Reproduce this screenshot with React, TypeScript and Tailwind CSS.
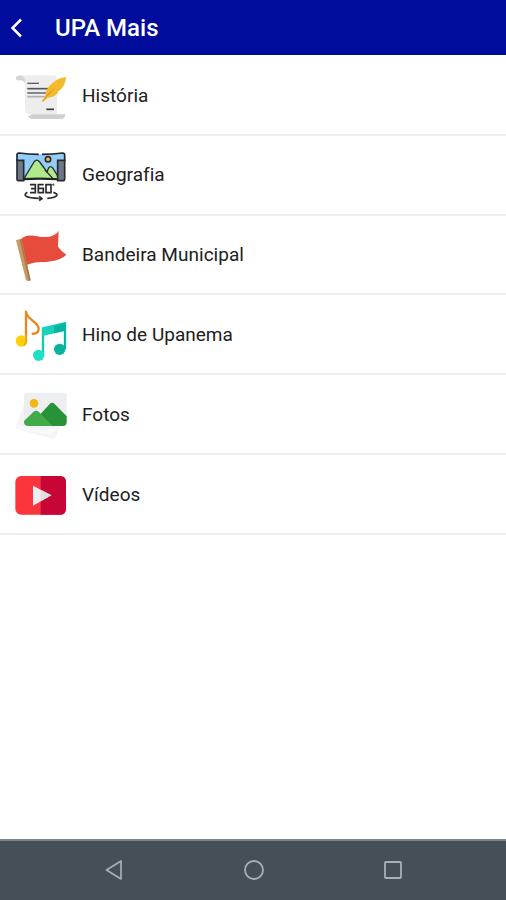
import type { ReactNode } from 'react';

const ScrollIcon = () => (
    <svg viewBox="21 15 156 156" className="size-[52px] shrink-0">
        <path d="M24 36q4-5 12-5h102q9 0 9 11v106H66q-13 0-15-16V55q-2-8-9-9H28q-7-2-4-10z" fill="#ededee" />
        <path d="M24 37q5-7 15-5 11 3 12 14v8q-5-8-11-8H28q-6-2-4-9z" fill="#d3d3d6" />
        <path d="M70 148h102q0 14-14 14H72q-9 0-12-11 6 4 10-3z" fill="#d0d0d3" />
        <path d="M58 55h35" stroke="#5d5d61" strokeWidth="4" />
        <path d="M58 71h64" stroke="#56565a" strokeWidth="5" />
        <path d="M58 84h58" stroke="#737377" strokeWidth="5" />
        <path d="M58 95h52" stroke="#b0b0b3" strokeWidth="5" />
        <path d="M115 133h23" stroke="#39393b" strokeWidth="5" />
        <path d="M174 36c-24 2-46 19-57 37-4 7-4 15-5 21l-11 15 5 1 13-12c13-1 25-5 32-16l-3-1c13-6 25-23 26-45z" fill="#f3bb2b" />
        <path d="m102 109 17-22 29-25-24 26-20 21z" fill="#d89a17" />
    </svg>
);

const PanoramaIcon = () => (
    <svg viewBox="21 22 156 156" className="size-[52px] shrink-0">
        <path d="M27 32q70 6 143 0v76q-72-4-143 0z" fill="#94ccf8" />
        <path d="m48 108 30-50q8-11 17 0l22 30 5-12q6-8 12 0l16 25v8q-51-4-102-1z" fill="#b2e98a" stroke="#24302f" strokeWidth="4" />
        <path d="m111 82 24 26" stroke="#24302f" strokeWidth="4" />
        <circle cx="120" cy="50" r="8" fill="#f4b955" stroke="#2b2c2d" strokeWidth="5" />
        <path d="M27 56V36q0-5 6-5 30 4 59 4M102 35q32 0 62-4 6 0 6 6v19M47 110q50-3 102 0" fill="none" stroke="#202328" strokeWidth="5" strokeLinejoin="round" />
        <path d="M27 53h20v61H31q-4 0-4-4zM149 53h21v57q0 4-4 4h-17z" fill="#6d7788" stroke="#252930" strokeWidth="5" />
        <g fill="none" stroke="#292a2c" strokeWidth="5">
            <path d="M66 126h16v24H66M69 138h13M107 126H91v24h15v-13H91M114 126h15v24h-15z" />
            <circle cx="136" cy="126" r="2" strokeWidth="3" />
            <path d="M58 149c-17 10 0 17 34 18M136 149c21 6 10 16-18 18" />
            <path d="m94 160 11 8-11 7z" fill="#292a2c" strokeWidth="2" />
        </g>
    </svg>
);

const FlagIcon = () => (
    <svg viewBox="21 21 156 156" className="size-[52px] shrink-0">
        <path d="M37 53C62 24 99 56 133 41q14-5 19-15l-2 48q11 15 25 24c-18 17-46 21-69 22-24 0-38 3-55 12z" fill="#e74b3c" />
        <path d="m24 55 12-4q4 0 5 4l27 120-9 3-5-4z" fill="#c79b65" />
        <path d="m35 53 5 1 28 121-5 2z" fill="#a8794c" />
    </svg>
);

const MusicIcon = () => (
    <svg viewBox="21 21 156 156" className="size-[52px] shrink-0">
        <path d="M54 117V29c3 26 38 29 38 52 0 10-8 15-21 14" fill="none" stroke="#e68a1e" strokeWidth="7" strokeLinejoin="round" />
        <circle cx="40" cy="117" r="17" fill="#fdd20a" />
        <path d="M51 107v-9h6v19q0 12-10 16 6-11 4-26z" fill="#eda616" />
        <path d="M105 160V79l66-15v77" fill="none" stroke="#12c9b1" strokeWidth="7" />
        <path d="m103 79 70-16v23l-70 16z" fill="#18d2bc" />
        <circle cx="92" cy="160" r="17" fill="#20dfc5" />
        <circle cx="155" cy="142" r="17" fill="#08b49d" />
        <path d="m138 72 35-9v79h-5V87l-30 7z" fill="#08b49d" />
    </svg>
);

const PhotosIcon = () => (
    <svg viewBox="21 21 156 156" className="size-[52px] shrink-0">
        <path d="m47 72-24 62q-1 6 5 8l103 27q7 2 11-4l16-34z" fill="#f3f4f8" />
        <path d="M34 93v39l79 13 41-10-27 24-98-17z" fill="#f9f9fb" />
        <rect x="48" y="32" width="128" height="100" rx="9" fill="#eceef2" />
        <circle cx="78" cy="64" r="13" fill="#f4b814" />
        <path d="m93 101 32-35q7-7 15 0l36 37v17q0 12-12 12H91z" fill="#279238" />
        <path d="m48 117 28-27q8-7 17 0l41 42H59q-12-1-11-15z" fill="#43aa49" />
    </svg>
);

const VideoIcon = () => (
    <svg viewBox="21 21 156 156" className="size-[52px] shrink-0">
        <rect x="22" y="42" width="152" height="116" rx="18" fill="#fc343b" />
        <path d="M98 42h58q18 0 18 18v80q0 18-18 18H98z" fill="#c80635" />
        <path d="m75 71 55 29-55 31z" fill="#f0edf0" />
        <path d="m98 83 32 17-32 18z" fill="#e0dfe4" />
    </svg>
);

const items: { label: string; icon: ReactNode }[] = [
    { label: 'História', icon: <ScrollIcon /> },
    { label: 'Geografia', icon: <PanoramaIcon /> },
    { label: 'Bandeira Municipal', icon: <FlagIcon /> },
    { label: 'Hino de Upanema', icon: <MusicIcon /> },
    { label: 'Fotos', icon: <PhotosIcon /> },
    { label: 'Vídeos', icon: <VideoIcon /> },
];

export default function App() {
    return (
        <main className="flex h-screen flex-col overflow-hidden bg-white font-['Roboto',sans-serif]">
            <header className="flex h-[55px] shrink-0 items-center bg-[#000c9c] pl-[10px] text-white">
                <button aria-label="Voltar" className="w-[45px]">
                    <svg viewBox="0 0 14 20" className="h-5 w-[14px]" fill="none" stroke="currentColor" strokeWidth="2.5">
                        <path d="M11 1.5 2.5 10l8.500 8.500" />
                    </svg>
                </button>
                <h1 className="text-[24px] font-medium leading-7">UPA Mais</h1>
            </header>

            <ul className="flex-1 pt-px">
                {items.map((item) => (
                    <li key={item.label} className="flex h-[79.8px] items-center gap-[15px] border-b-2 border-[#eeeeee] pl-[15px] pt-[2px]">
                        {item.icon}
                        <span className="text-[19px] tracking-[0.02px] text-[#202020]">{item.label}</span>
                    </li>
                ))}
            </ul>

            {/* Android navigation bar */}
            <nav className="flex h-[61px] shrink-0 items-center justify-between border-t-2 border-[#7c8485] bg-[#464e57] pb-[2px] pl-[104px] pr-[103px] text-[#a8afb5]">
                <svg viewBox="0 0 20 22" className="h-[22px] w-5" fill="none" stroke="currentColor" strokeWidth="1.7">
                    <path d="M17 2v18L2.500 11z" strokeLinejoin="round" />
                </svg>
                <svg viewBox="0 0 22 22" className="size-[22px]" fill="none" stroke="currentColor" strokeWidth="1.8">
                    <circle cx="11" cy="11" r="9" />
                </svg>
                <svg viewBox="0 0 20 20" className="size-5" fill="none" stroke="currentColor" strokeWidth="1.8">
                    <rect x="2" y="2" width="16" height="16" rx="1" />
                </svg>
            </nav>
        </main>
    );
}
